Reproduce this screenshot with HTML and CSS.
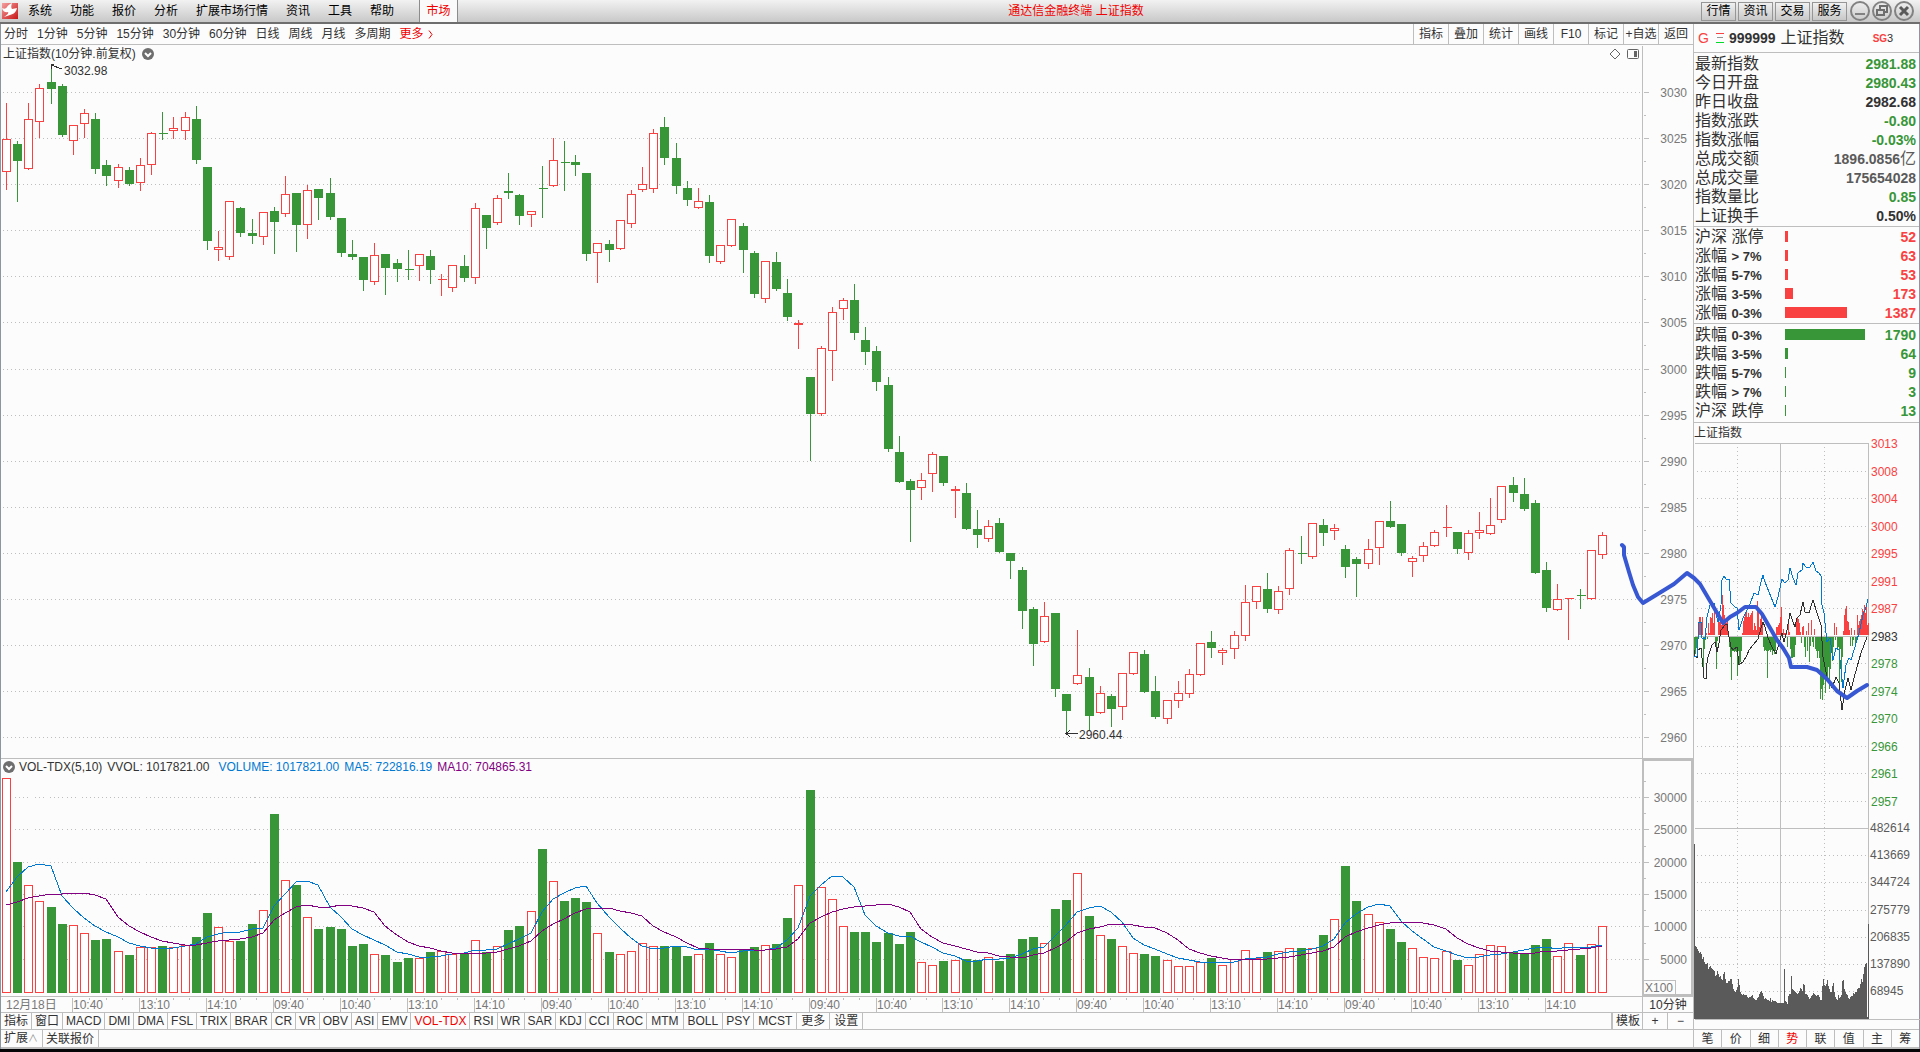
FILE: index.html
```html
<!DOCTYPE html>
<html lang="zh-CN">
<head>
  <meta charset="UTF-8">
  <meta name="viewport" content="width=device-width, initial-scale=1.0">
  <title>通达信金融终端 上证指数</title>
  <link rel="stylesheet" href="styles.css">
</head>
<body>
  <header class="menubar">
    <svg class="logo" viewBox="0 0 16 16" aria-hidden="true">
      <defs>
        <linearGradient id="logoRed" x1="0" y1="0" x2="1" y2="1">
          <stop offset="0" stop-color="#f4a0a0"/>
          <stop offset="1" stop-color="#c81414"/>
        </linearGradient>
      </defs>
      <rect width="16" height="16" fill="url(#logoRed)"/>
      <path d="M0 5C2 6 4 6 5 4C6 2 8 1 10 0C9 3 9 5 10 6L15 5C14 9 12 11 8 12L2 14C5 12 7 10 6 9C4 10 1 9 0 5Z" fill="#fff"/>
    </svg>
    <nav class="menu">
      <button>系统</button>
      <button>功能</button>
      <button>报价</button>
      <button>分析</button>
      <button>扩展市场行情</button>
      <button>资讯</button>
      <button>工具</button>
      <button>帮助</button>
    </nav>
    <button class="market">市场</button>
    <div class="app-title">通达信金融终端 上证指数</div>
    <div class="quick">
      <button>行情</button>
      <button>资讯</button>
      <button>交易</button>
      <button>服务</button>
    </div>
    <div class="window-buttons">
      <button aria-label="最小化"><svg viewBox="0 0 20 20"><circle cx="10" cy="10" r="9"/><path class="thick" d="M5 13H15"/></svg></button>
      <button aria-label="还原"><svg viewBox="0 0 20 20"><circle cx="10" cy="10" r="9"/><path class="restore" d="M8 8V5H15V11H12M5 9H12V14H5Z"/></svg></button>
      <button aria-label="关闭"><svg viewBox="0 0 20 20"><circle cx="10" cy="10" r="9"/><path class="close" d="M6 6L14 14M14 6L6 14"/></svg></button>
    </div>
  </header>

  <main class="workspace">
    <section class="left">
      <div class="toolbar">
        <div class="periods">
          <button>分时</button>
          <button>1分钟</button>
          <button>5分钟</button>
          <button>15分钟</button>
          <button>30分钟</button>
          <button>60分钟</button>
          <button>日线</button>
          <button>周线</button>
          <button>月线</button>
          <button>多周期</button>
          <button class="red">更多 <svg class="chevron" viewBox="0 0 5 9"><path d="M1 0.5L4 4.5L1 8.5"/></svg></button>
        </div>
        <div class="tools">
          <button>指标</button>
          <button>叠加</button>
          <button>统计</button>
          <button>画线</button>
          <button>F10</button>
          <button>标记</button>
          <button>+自选</button>
          <button>返回</button>
        </div>
      </div>

      <div class="panel price-panel">
        <svg id="priceChart" class="chart"></svg>
        <div class="panel-title">
          <span>上证指数(10分钟.前复权)</span>
          <svg class="fold" viewBox="0 0 12 12"><circle cx="6" cy="6" r="6"/><path d="M3 5L6 8L9 5"/></svg>
        </div>
        <div class="panel-icons">
          <svg viewBox="0 0 12 12"><path d="M6 1L11 6L6 11L1 6Z"/></svg>
          <svg viewBox="0 0 12 12"><rect x="0.5" y="1.5" width="11" height="9" rx="1"/><path class="solid" d="M7 3H10V9H7Z"/></svg>
        </div>
      </div>

      <div class="panel volume-panel">
        <svg id="volumeChart" class="chart"></svg>
        <div class="panel-title">
          <svg class="fold" viewBox="0 0 12 12"><circle cx="6" cy="6" r="6"/><path d="M3 5L6 8L9 5"/></svg>
          <span>VOL-TDX(5,10)</span>
          <span>VVOL: 1017821.00</span>
          <span class="blue first">VOLUME: 1017821.00</span>
          <span class="blue">MA5: 722816.19</span>
          <span class="purple">MA10: 704865.31</span>
        </div>
      </div>

      <div class="time-axis">
        <svg id="timeAxis" class="chart"></svg>
        <div class="period-name">10分钟</div>
      </div>

      <div class="indicators">
        <button>指标</button>
        <button>窗口</button>
        <button>MACD</button>
        <button>DMI</button>
        <button>DMA</button>
        <button>FSL</button>
        <button>TRIX</button>
        <button>BRAR</button>
        <button>CR</button>
        <button>VR</button>
        <button>OBV</button>
        <button>ASI</button>
        <button>EMV</button>
        <button class="red">VOL-TDX</button>
        <button>RSI</button>
        <button>WR</button>
        <button>SAR</button>
        <button>KDJ</button>
        <button>CCI</button>
        <button>ROC</button>
        <button class="wide">MTM</button>
        <button class="wide">BOLL</button>
        <button>PSY</button>
        <button class="wide">MCST</button>
        <button class="wide">更多</button>
        <button class="wide">设置</button>
        <button class="template">模板</button>
        <button class="zoom">+</button>
        <button class="zoom">−</button>
      </div>

      <div class="extend">
        <button>扩展<span class="caret">∧</span></button>
        <button>关联报价</button>
      </div>
    </section>

    <aside class="side">
      <div class="stock">
        <b class="g">G</b>
        <svg class="bars" viewBox="0 0 8 10"><path d="M0 0.5H8" stroke="#fa4141"/><path d="M1 4.5H7" stroke="#969696"/><path d="M0 9.5H8" stroke="#00dc28"/></svg>
        <b class="code">999999</b>
        <span class="name">上证指数</span>
        <span class="flag"><b>SG</b>3</span>
      </div>

      <table class="quote">
        <tr><th>最新指数</th><td class="down">2981.88</td></tr>
        <tr><th>今日开盘</th><td class="down">2980.43</td></tr>
        <tr><th>昨日收盘</th><td>2982.68</td></tr>
        <tr><th>指数涨跌</th><td class="down">-0.80</td></tr>
        <tr><th>指数涨幅</th><td class="down">-0.03%</td></tr>
        <tr><th>总成交额</th><td class="grey">1896.0856<span class="unit">亿</span></td></tr>
        <tr><th>总成交量</th><td class="grey">175654028</td></tr>
        <tr><th>指数量比</th><td class="down">0.85</td></tr>
        <tr><th>上证换手</th><td>0.50%</td></tr>
      </table>

      <table class="spread up">
        <tr><th>沪深 涨停</th><td class="bar"><i style="width:3px"></i></td><td>52</td></tr>
        <tr><th>涨幅 <b>&gt; 7%</b></th><td class="bar"><i style="width:3px"></i></td><td>63</td></tr>
        <tr><th>涨幅 <b>5-7%</b></th><td class="bar"><i style="width:3px"></i></td><td>53</td></tr>
        <tr><th>涨幅 <b>3-5%</b></th><td class="bar"><i style="width:8px"></i></td><td>173</td></tr>
        <tr><th>涨幅 <b>0-3%</b></th><td class="bar"><i style="width:62px"></i></td><td>1387</td></tr>
      </table>

      <table class="spread down">
        <tr><th>跌幅 <b>0-3%</b></th><td class="bar"><i style="width:80px"></i></td><td>1790</td></tr>
        <tr><th>跌幅 <b>3-5%</b></th><td class="bar"><i style="width:3px"></i></td><td>64</td></tr>
        <tr><th>跌幅 <b>5-7%</b></th><td class="bar"><i style="width:1px"></i></td><td>9</td></tr>
        <tr><th>跌幅 <b>&gt; 7%</b></th><td class="bar"><i style="width:1px"></i></td><td>3</td></tr>
        <tr><th>沪深 跌停</th><td class="bar"><i style="width:1px"></i></td><td>13</td></tr>
      </table>

      <div class="mini-title">上证指数</div>
      <div class="mini"><svg id="miniChart" class="chart"></svg></div>

      <div class="side-tabs">
        <button>笔</button>
        <button>价</button>
        <button>细</button>
        <button class="red">势</button>
        <button>联</button>
        <button>值</button>
        <button>主</button>
        <button>筹</button>
      </div>
    </aside>
  </main>

  <footer class="taskbar"></footer>

  <svg class="sketch" viewBox="0 0 1920 1052" preserveAspectRatio="none" aria-hidden="true">
    <path d="M1622 545L1624 547L1624 555L1629 572L1633 585L1638 597L1643 603L1661 592L1674 584L1687 573L1694 578L1700 584L1723 623L1730 617L1737 613L1745 607L1756 607L1762 614L1777 640L1783 648L1789 658L1791 667L1807 667L1817 670L1827 679L1837 691L1847 698L1857 691L1867 685"/>
  </svg>

  <script src="chart.js"></script>
</body>
</html>
```

FILE: styles.css
```css
* {
  box-sizing: border-box;
}

body {
  margin: 0;
  height: 100vh;
  display: flex;
  flex-direction: column;
  position: relative;
  overflow: hidden;
  background-color: #fcfcfc;
  color: #323232;
  font-family: "Liberation Sans", "Noto Sans CJK SC", sans-serif;
  font-size: 12px;
  line-height: 16px;
}

button {
  margin: 0;
  padding: 0;
  border: none;
  background: none;
  color: inherit;
  font: inherit;
  white-space: nowrap;
  cursor: pointer;
}

svg {
  display: block;
}

.red {
  color: #f00000;
}

/* Menu bar */
.menubar {
  display: flex;
  align-items: center;
  position: relative;
  height: 24px;
  padding-left: 2px;
  background: linear-gradient(#f2f2f2, #c8c8c8);
  border-bottom: 2px solid #6e6e6e;
  color: #000;
}

.logo {
  width: 16px;
  height: 16px;
}

.menu {
  display: flex;
  gap: 18px;
  padding-left: 10px;
}

.market {
  align-self: stretch;
  width: 39px;
  margin-left: 25px;
  background-color: #fafafa;
  border-left: 1px solid #8c8c8c;
  border-right: 1px solid #8c8c8c;
  color: #f00000;
}

.app-title {
  position: absolute;
  left: 0;
  right: 0;
  text-align: center;
  padding-left: 232px;
  color: #f00000;
  pointer-events: none;
}

.quick {
  display: flex;
  gap: 2px;
  margin-left: auto;
}

.quick button {
  width: 35px;
  height: 19px;
  border: 1px solid #969696;
  background: linear-gradient(#f0f0f0, #c8c8c8);
}

.window-buttons {
  display: flex;
  gap: 2px;
  padding: 0 6px 0 3px;
}

.window-buttons svg {
  width: 20px;
  height: 20px;
  fill: none;
  stroke: #828282;
  stroke-width: 2;
}

.window-buttons .restore {
  stroke: #6e6e6e;
  stroke-width: 2;
}

.window-buttons .close {
  stroke: #5a5a5a;
  stroke-width: 3;
}

/* Main layout */
.workspace {
  flex: 1;
  display: flex;
  min-height: 0;
}

.left {
  flex: 1;
  display: flex;
  flex-direction: column;
  min-width: 0;
  border-left: 1px solid #8c96a0;
}

.toolbar {
  display: flex;
  justify-content: space-between;
  height: 21px;
  border-bottom: 1px solid #bebebe;
}

.periods {
  display: flex;
  align-items: center;
  gap: 9px;
  padding-left: 3px;
}

.periods .red {
  display: flex;
  align-items: center;
  gap: 4px;
}

.chevron {
  width: 5px;
  height: 9px;
  fill: none;
  stroke: #f00000;
}

.tools {
  display: flex;
}

.tools button {
  width: 35px;
  border-left: 1px solid #bebebe;
}

/* Chart panels */
.panel {
  position: relative;
  min-height: 0;
}

.price-panel {
  flex: 714;
  border-bottom: 1px solid #bebebe;
}

.volume-panel {
  flex: 237;
}

.chart {
  width: 100%;
  height: 100%;
  overflow: visible;
  shape-rendering: crispEdges;
}

.chart text {
  font-size: 12px;
  fill: #787878;
}

.chart .end {
  text-anchor: end;
}

.chart .note {
  fill: #323232;
}

.chart .vol-text {
  fill: #5a5a5a;
}

.chart .up-text {
  fill: #fa4141;
}

.chart .down-text {
  fill: #389638;
}

.line {
  stroke: #bebebe;
  fill: none;
}

.thick-line {
  stroke: #bebebe;
  stroke-width: 2;
  fill: none;
}

.dots {
  stroke: #bebebe;
  stroke-dasharray: 1 3;
  fill: none;
}

.candle-up {
  stroke: #fa4141;
  fill: #fff;
}

.candle-down {
  stroke: #389638;
  fill: #389638;
}

.ma5 {
  stroke: #0078d2;
  fill: none;
}

.ma10 {
  stroke: #820082;
  fill: none;
}

.price-line,
.arrow {
  stroke: #323232;
  fill: none;
}

.mini-up {
  stroke: #fa4141;
}

.mini-down {
  stroke: #389638;
}

.mini-volume {
  fill: #5a5a5a;
}

.panel-title {
  position: absolute;
  top: 0;
  left: 2px;
  display: flex;
  align-items: center;
  gap: 6px;
  height: 18px;
}

.volume-panel .panel-title {
  gap: 5px;
  height: 16px;
}

.panel-title .first {
  margin-left: 4px;
}

.fold {
  width: 12px;
  height: 12px;
  fill: #6e6e6e;
}

.fold path {
  fill: none;
  stroke: #fff;
  stroke-width: 2;
}

.volume-panel .fold {
  margin-right: -1px;
}

.blue {
  color: #0078d2;
}

.purple {
  color: #820082;
}

.panel-icons {
  position: absolute;
  top: 3px;
  right: 54px;
  display: flex;
  gap: 6px;
}

.panel-icons svg {
  width: 12px;
  height: 12px;
  fill: none;
  stroke: #646464;
}

.panel-icons .solid {
  fill: #646464;
  stroke: none;
}

.time-axis {
  display: flex;
  height: 17px;
  border-top: 1px solid #bebebe;
  border-bottom: 1px solid #bebebe;
}

.time-axis .chart {
  flex: 1;
  width: auto;
  min-width: 0;
}

.period-name {
  width: 51px;
  border-left: 1px solid #bebebe;
  text-align: center;
}

/* Bottom rows */
.indicators,
.extend {
  display: flex;
  height: 17px;
  border-bottom: 1px solid #bebebe;
}

.indicators button {
  padding: 0 3px;
  border-right: 1px solid #bebebe;
}

.indicators .wide {
  padding: 0 4px;
}

.indicators .template {
  width: 32px;
  margin-left: auto;
  border-left: 2px solid #bebebe;
}

.indicators .zoom {
  width: 25px;
}

.indicators .zoom:last-child {
  border-right: none;
}

.extend {
  height: 19px;
  border-bottom-width: 2px;
}

.extend button {
  padding: 0 4px 0 3px;
  border-right: 1px solid #bebebe;
}

.caret {
  color: #969696;
  font-size: 10px;
}

/* Quote panel */
.side {
  display: flex;
  flex-direction: column;
  width: 227px;
  border-left: 1px solid #bebebe;
  border-right: 1px solid #8c96a0;
}

.stock {
  display: flex;
  align-items: center;
  height: 29px;
  padding-left: 4px;
  border-bottom: 1px solid #bebebe;
}

.stock .g {
  color: #fa4141;
  font-size: 14px;
  font-weight: normal;
}

.bars {
  width: 8px;
  height: 10px;
  margin: 0 5px 0 7px;
}

.stock .code {
  font-size: 14px;
}

.stock .name {
  margin-left: 5px;
  font-size: 16px;
}

.flag {
  margin-left: 28px;
  font-size: 11px;
}

.flag b {
  color: #fa4141;
  font-size: 10px;
}

.quote,
.spread {
  width: 100%;
  border-collapse: separate;
  border-spacing: 0;
  padding: 1px 3px 1px 1px;
  border-bottom: 1px solid #bebebe;
}

.quote th,
.spread th {
  height: 19px;
  padding: 0;
  font-size: 16px;
  font-weight: normal;
  line-height: 18px;
  text-align: left;
  white-space: nowrap;
}

.quote td,
.spread td {
  height: 19px;
  padding: 0;
  font-size: 14px;
  font-weight: bold;
  line-height: 18px;
  text-align: right;
}

.quote .down,
.spread.down td {
  color: #389638;
}

.quote .grey {
  color: #5a5a5a;
}

.unit {
  font-size: 16px;
  font-weight: normal;
  line-height: 1;
}

.spread th {
  width: 90px;
}

.spread th b {
  font-size: 13px;
  line-height: 1;
}

.spread.up {
  padding-top: 0;
}

.spread.up td {
  color: #fa4141;
}

.spread .bar i {
  display: block;
  height: 11px;
  background-color: #fa4141;
}

.spread.down {
  padding-bottom: 2px;
}

.spread.down .bar i {
  background-color: #389638;
}

.mini-title {
  height: 20px;
  line-height: 20px;
}

.mini {
  flex: 1;
  min-height: 0;
}

.side-tabs {
  display: flex;
  height: 20px;
  border-top: 1px solid #bebebe;
  border-bottom: 2px solid #bebebe;
}

.side-tabs button {
  flex: 1;
  border-right: 1px solid #bebebe;
}

.side-tabs button:last-child {
  border-right: none;
}

.taskbar {
  height: 3px;
  background-color: #050508;
}

/* Hand-drawn line over the charts */
.sketch {
  position: absolute;
  top: 0;
  left: 0;
  width: 100%;
  height: 100%;
  fill: none;
  stroke: #3758d2;
  stroke-width: 4;
  stroke-linejoin: round;
  stroke-linecap: round;
  pointer-events: none;
}
```

FILE: chart.js
```js
// [high, body top, body bottom, low, rising, volume top]
const candles = [
  [102,139,172,189,1,778],[140,144,161,201,0,862],[102,119,169,169,1,885],[83,88,122,137,1,901],
  [65,82,89,103,0,907],[83,86,135,136,0,924],[124,125,141,154,1,925],[108,113,124,137,1,933],
  [112,119,169,173,0,940],[159,165,176,185,0,939],[163,167,181,187,1,951],[166,170,184,185,0,955],
  [157,165,183,190,1,947],[131,133,165,174,1,947],[111,133,134,139,0,946],[116,128,131,138,1,947],
  [111,117,131,139,1,945],[105,119,160,163,0,937],[167,167,241,249,0,913],[230,247,250,260,1,927],
  [201,201,257,259,1,941],[206,208,233,236,0,941],[218,233,236,243,0,924],[212,212,237,244,1,910],
  [206,211,222,253,0,814],[175,194,214,216,1,880],[193,193,225,251,0,885],[184,190,225,238,1,917],
  [189,189,198,219,0,929],[177,193,217,219,0,927],[218,218,253,256,0,929],[239,254,257,259,0,946],
  [257,257,280,290,0,944],[242,255,282,284,1,954],[254,254,268,294,0,955],[258,263,269,281,0,962],
  [249,269,270,279,0,958],[254,254,266,280,1,958],[249,256,270,283,0,952],[273,279,280,295,1,951],
  [265,265,288,291,1,954],[254,266,278,281,0,953],[202,208,278,283,1,940],[214,215,228,248,0,952],
  [194,198,223,224,1,946],[172,191,193,198,0,930],[193,195,216,224,0,926],[211,211,215,226,1,911],
  [165,188,189,217,0,849],[137,160,186,186,1,881],[140,162,163,190,0,901],[154,162,165,175,0,898],
  [173,173,254,260,0,902],[243,243,253,282,1,933],[239,244,250,261,0,952],[219,220,249,249,1,954],
  [189,194,224,227,1,951],[166,184,190,191,1,943],[128,133,189,192,1,946],[116,127,158,164,0,946],
  [142,158,186,193,0,947],[180,188,200,205,0,956],[187,201,208,208,1,954],[194,202,256,262,0,943],
  [245,245,262,263,1,954],[219,219,246,246,1,957],[222,226,250,272,0,949],[250,253,294,297,0,947],
  [261,261,299,302,1,945],[251,262,289,290,0,944],[278,293,317,320,0,918],[319,323,325,348,1,885],
  [377,377,414,460,0,790],[345,348,414,415,1,887],[306,312,351,380,1,899],[297,300,309,319,1,926],
  [283,300,333,339,0,932],[326,340,352,364,0,932],[345,351,382,390,0,942],[376,385,449,451,0,933],
  [435,452,482,482,0,944],[478,481,490,541,0,932],[472,480,488,499,1,962],[451,454,474,491,1,965],
  [455,456,483,485,0,961],[485,489,491,517,1,960],[482,493,529,529,0,959],[509,529,535,547,0,960],
  [519,526,539,541,1,957],[517,523,552,552,0,961],[553,553,561,578,0,954],[566,570,611,628,0,939],
  [606,609,644,665,0,937],[601,616,642,642,1,943],[613,613,689,696,0,909],[694,694,711,733,0,900],
  [629,675,684,684,1,873],[667,677,716,730,0,916],[685,693,713,713,1,935],[693,696,709,726,0,939],
  [672,673,707,719,1,946],[651,652,674,674,1,953],[649,654,692,692,0,954],[675,691,717,718,0,956],
  [699,700,719,723,1,960],[680,693,701,707,1,966],[668,674,694,697,1,966],[642,643,675,675,1,962],
  [630,642,648,657,0,958],[647,650,653,664,1,965],[630,635,649,658,1,959],[584,602,636,640,1,950],
  [586,586,602,608,1,958],[572,589,609,612,0,952],[585,591,610,613,1,951],[547,550,589,594,1,948],
  [535,553,554,563,0,948],[523,523,557,558,1,948],[518,525,533,545,0,935],[523,528,531,539,1,919],
  [544,549,567,577,0,866],[556,559,564,596,0,901],[538,549,564,568,1,914],[520,521,548,564,1,922],
  [500,521,527,527,0,929],[524,524,553,555,0,942],[555,558,562,576,1,948],[541,546,556,561,1,957],
  [529,532,546,546,1,958],[504,527,528,536,1,951],[532,532,549,553,0,960],[529,533,553,559,1,965],
  [511,530,533,538,1,954],[497,525,534,534,1,945],[485,486,520,522,1,946],[476,485,493,501,0,952],
  [477,494,509,510,0,954],[499,503,573,573,0,945],[561,570,608,611,0,939],[583,599,610,610,1,956],
  [597,598,599,639,1,943],[588,595,596,608,0,955],[550,550,599,599,1,944],[531,535,555,558,1,926]
];

// Averages that need bars from before the first one shown
const ma5Start = [892, 877, 867, 864];
const ma10Start = [905, 902, 898, 896, 894, 894, 893, 893, 895];

const miniBars = [
  -19,-17,-11,-19,8,18,18,8,18,-34,-12,-3,2,-2,12,2,18,17,22,12,
  24,-6,-32,-4,14,13,18,10,40,30,20,12,12,14,3,-10,-20,-43,-14,-14,
  -15,-14,-15,-39,-14,-27,-25,-14,2,14,18,22,25,18,22,18,20,22,24,5,
  12,9,5,34,26,8,16,24,10,-10,-14,-13,-14,-41,-14,-13,-15,-13,-18,-13,
  -17,-14,8,8,10,12,18,28,2,6,2,2,3,-10,12,3,-12,-21,-21,-20,
  -20,-8,14,18,16,12,3,-6,8,9,-10,-20,4,-14,12,-25,-9,15,-5,-10,
  6,-12,-14,-21,-14,-21,-62,-52,-63,-48,-40,-56,-38,-40,-30,-52,-32,-10,-24,-10,
  12,-3,8,-12,-10,-48,-12,-45,-20,4,20,26,29,14,13,5,-9,7,-9,-3,
  5,-7,-4,20,10,14,16,20,26,24,30,22,28,10,12
];

const miniBlue = "0,213 3,213 5,179 7,179 8,195 11,196 13,174 16,162 20,160 23,175 24,179 27,162 28,137 30,133 32,136 35,136 37,160 41,164 43,165 45,187 49,175 53,167 56,161 60,150 64,152 67,139 69,132 71,139 75,149 81,164 84,154 88,136 91,140 94,137 96,125 99,135 102,142 104,130 108,127 109,120 112,124 116,124 119,119 122,128 125,130 127,133 128,162 130,170 133,199 136,195 139,217 142,205 145,207 149,245 152,222 155,215 157,217 161,204 165,190 169,172 172,164 174,156";
const miniBlack = "0,207 1,213 3,215 4,207 7,205 9,224 10,235 12,235 12,227 14,214 18,202 21,199 23,209 25,200 27,187 31,182 33,181 35,194 37,204 39,207 43,204 45,222 49,219 53,212 55,207 59,202 64,196 67,185 69,179 71,184 74,195 78,204 82,211 85,200 88,190 90,199 93,187 96,170 99,179 101,184 103,175 106,172 109,159 111,169 115,170 119,157 123,170 127,182 129,214 133,234 138,245 142,234 145,240 148,267 151,247 154,235 157,247 160,235 163,224 167,210 170,202 173,194";

const miniVolume = [
  175,73,72,70,68,66,67,65,60,62,57,55,56,50,52,53,51,50,49,48,43,44,48,45,42,43,40,39,45,47,40,36,36,38,38,40,
  35,30,28,27,29,32,40,34,27,25,24,25,24,24,24,22,21,22,22,23,24,21,20,19,21,22,25,27,28,26,23,20,21,20,19,19,
  18,21,17,19,18,18,18,17,16,16,16,16,16,16,50,18,17,15,23,25,25,43,30,29,28,27,26,25,26,28,31,30,28,35,34,25,
  24,22,20,21,23,24,26,25,24,23,24,24,22,19,19,33,40,34,33,35,39,33,30,27,33,36,27,22,20,19,24,21,22,24,38,39,
  30,27,25,24,21,20,22,23,23,26,25,27,30,31,31,35,40,37,45,52,55,56,2,95
];

const UP_TO = 1693;

// Maps design coordinates to the current size of one panel
function scaler(svg, x0, y0, w, h) {
  const box = svg.getBoundingClientRect();
  return {
    x: v => Math.round((v - x0) * box.width / w),
    y: v => Math.round((v - y0) * box.height / h)
  };
}

function line(x1, y1, x2, y2, cls) {
  const thin = cls !== "thick-line" ? 0.5 : 0;
  return `<path class="${cls}" d="M${x1 + thin} ${y1 + thin}L${x2 + thin} ${y2 + thin}"/>`;
}

function text(x, y, value, cls) {
  return `<text x="${x}" y="${y}" class="${cls}">${value}</text>`;
}

function bar(x, top, bottom, rising) {
  const h = Math.max(bottom - top - 1, 0);
  const cls = rising ? "candle-up" : "candle-down";
  if (h === 0) return line(x - 4, top, x + 5, top, cls);
  return `<rect class="${cls}" x="${x - 3.5}" y="${top + 0.5}" width="8" height="${h}"/>`;
}

const centre = i => Math.round(6 + i * 11.16);

function drawPrice() {
  const svg = document.getElementById("priceChart");
  const s = scaler(svg, 1, 45, UP_TO - 1, 713);
  let out = "";
  for (let k = 0; k < 15; k++) {
    const y = s.y(92 + k * 46.07);
    out += line(s.x(2), y, s.x(1640), y, "dots");
    out += line(s.x(1643), y, s.x(1648), y, "line");
    out += text(s.x(1687), y + 5, 3030 - k * 5, "end");
    if (k < 14) {
      const half = s.y(115 + k * 46.07);
      out += line(s.x(1643), half, s.x(1645), half, "line");
    }
  }
  out += line(s.x(1642), s.y(45), s.x(1642), s.y(758), "line");
  candles.forEach(([high, top, bottom, low, rising], i) => {
    const x = s.x(centre(i));
    const cls = rising ? "candle-up" : "candle-down";
    out += line(x, s.y(high), x, s.y(low), cls);
    out += bar(x, s.y(top), s.y(bottom), rising);
  });
  const hx = s.x(51), hy = s.y(65);
  out += `<path class="arrow" d="M${hx + 3} ${hy - 0.5}H${hx}V${hy + 4}M${hx} ${hy}L${hx + 11} ${hy + 4}"/>`;
  out += text(s.x(64), s.y(75), "3032.98", "note");
  const lx = s.x(1066), ly = s.y(733);
  out += `<path class="arrow" d="M${lx + 4} ${ly - 3}L${lx} ${ly + 0.5}L${lx + 4} ${ly + 4}M${lx} ${ly + 0.5}H${lx + 12}"/>`;
  out += text(s.x(1079), s.y(739), "2960.44", "note");
  svg.innerHTML = out;
}

// Averages work on the bar tops, because their heights are linear in volume
function average(length, start) {
  return candles.map((c, i) => {
    if (i < start.length) return start[i];
    const part = candles.slice(i - length + 1, i + 1);
    return part.reduce((sum, row) => sum + row[5], 0) / length;
  });
}

function drawVolume() {
  const svg = document.getElementById("volumeChart");
  const s = scaler(svg, 1, 759, UP_TO - 1, 237);
  let out = "";
  for (let k = 0; k < 6; k++) {
    const y = s.y(959 - k * 32.4);
    out += line(s.x(14), y, s.x(1640), y, "dots");
    out += line(s.x(1643), y, s.x(1648), y, "line");
    out += line(s.x(1643), s.y(943 - k * 32.4), s.x(1645), s.y(943 - k * 32.4), "line");
    out += text(s.x(1687), y + 5, (k + 1) * 5000, "end");
  }
  candles.forEach((c, i) => {
    out += bar(s.x(centre(i)), s.y(c[5]), s.y(993), c[4]);
  });
  [["ma5", average(5, ma5Start)], ["ma10", average(10, ma10Start)]].forEach(([cls, values]) => {
    const points = values.map((v, i) => `${s.x(centre(i))},${s.y(v)}`).join(" ");
    out += `<polyline class="${cls}" points="${points}"/>`;
  });
  const left = s.x(1643), right = s.x(1692), top = s.y(760), bottom = s.y(995);
  out += `<path class="thick-line" d="M${left} ${top}H${right}V${bottom}H${left}Z"/>`;
  out += `<path class="line" d="M${left} ${bottom - 14.5}H${left + 32.5}V${bottom}"/>`;
  out += text(left + 2, bottom - 3, "X100", "");
  svg.innerHTML = out;
}

function drawTime() {
  const svg = document.getElementById("timeAxis");
  const s = scaler(svg, 1, 997, 1641, 15);
  const hours = ["10:40", "13:10", "14:10", "09:40"];
  let out = text(s.x(6), 12, "12月18日", "");
  for (let k = 0; k < 23; k++) {
    const x = 72 + k * 66.96;
    out += line(s.x(x), 0, s.x(x), 15, "line");
    out += text(s.x(x) + 1, 12, hours[k % 4], "");
    [17, 34, 50].forEach(step => {
      if (x + step < 1550) out += line(s.x(x + step), 0, s.x(x + step), 2, "line");
    });
  }
  svg.innerHTML = out;
}

function drawMini() {
  const svg = document.getElementById("miniChart");
  const box = svg.getBoundingClientRect();
  const ky = box.height / 586;
  const y = v => Math.round(v * ky);
  const prices = [3013, 3008, 3004, 3000, 2995, 2991, 2987, 2983, 2978, 2974, 2970, 2966, 2961, 2957];
  const volumes = [482614, 413669, 344724, 275779, 206835, 137890, 68945];
  let out = "";
  prices.forEach((p, k) => {
    const py = y(k * 27.5);
    const cls = k < 7 ? "up-text" : k > 7 ? "down-text" : "note";
    out += line(k % 7 ? 2 : 0, py, 174, py, k % 7 ? "dots" : "line");
    out += text(177, py + 5, p, cls);
  });
  volumes.forEach((v, k) => {
    const vy = y(385 + k * 27.2);
    out += line(k ? 2 : 0, vy, 174, vy, k ? "dots" : "line");
    out += text(176, vy + 4, v, "vol-text");
  });
  out += line(0, y(576), 225, y(576), "line");
  out += line(43, 3, 43, y(576), "dots") + line(130, 3, 130, y(576), "dots");
  out += line(86, 0, 86, y(576), "line") + line(174, 0, 174, y(576), "line");
  miniBars.forEach((h, x) => {
    const from = h > 0 ? 192 : 194;
    out += `<path class="${h > 0 ? "mini-up" : "mini-down"}" d="M${x + 0.5} ${y(from)}V${y(from - h)}"/>`;
  });
  const move = points => points.split(" ").map(p => {
    const [px, py] = p.split(",");
    return `${px},${y(py)}`;
  }).join(" ");
  out += `<polyline class="price-line" points="${move(miniBlack)}"/>`;
  out += `<polyline class="ma5" points="${move(miniBlue)}"/>`;
  const step = 175 / miniVolume.length;
  let area = `M0 ${y(576)}`;
  miniVolume.forEach((v, i) => {
    area += `V${y(576 - v)}H${Math.round((i + 1) * step)}`;
  });
  out += `<path class="mini-volume" d="${area}V${y(576)}Z"/>`;
  svg.innerHTML = out;
}

function drawAll() {
  drawPrice();
  drawVolume();
  drawTime();
  drawMini();
}

drawAll();
window.addEventListener("resize", drawAll);
```
